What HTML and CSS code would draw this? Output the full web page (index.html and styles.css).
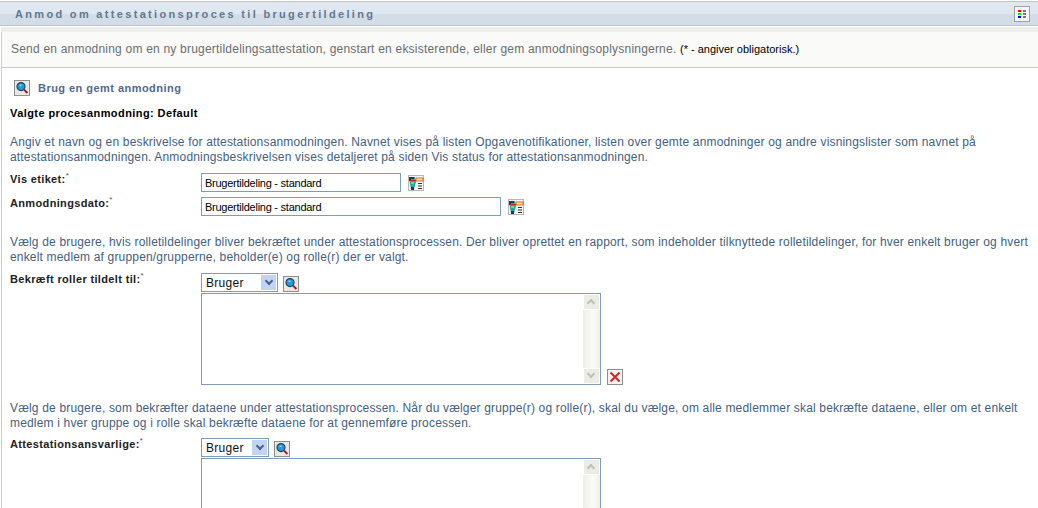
FILE: index.html
```
<!DOCTYPE html>
<html lang="da">
<head>
<meta charset="utf-8">
<title>Anmod om attestationsproces til brugertildeling</title>
<link rel="stylesheet" href="styles.css">
</head>
<body>
<svg class="defs" width="0" height="0" aria-hidden="true">
  <symbol id="i-search" viewBox="0 0 16 16">
    <rect x=".5" y=".5" width="15" height="15" fill="#e9e9e2" stroke="#8f8f8f"/>
    <circle cx="7" cy="6.600" r="4" fill="#2a9ad6" stroke="#17456e" stroke-width="1.200"/>
    <path d="M5.500 5.200h2" stroke="#bfe8fa" stroke-width="1.200"/>
    <path d="M10 9.600l3.400 3.400" stroke="#b01028" stroke-width="2"/>
  </symbol>
  <symbol id="i-picker" viewBox="0 0 16 16">
    <rect x="0" y="0" width="16" height="16" fill="#b8b8b0"/>
    <rect x="1" y="1" width="14" height="14" fill="#f4f4ee"/>
    <path d="M1 2h6l1 5-2 7H3L2 9z" fill="#27a89a"/>
    <path d="M1 2h5v2H3v2H1zM3 12h3v3H3z" fill="#173a72"/>
    <path d="M3 7h3v2H3z" fill="#8fd04c"/>
    <rect x="8" y="3" width="7" height="3" fill="#f8e678" stroke="#d0372a" stroke-width=".7"/>
    <path d="M2 5.500h6" stroke="#c8281e"/>
    <path d="M10 8.500h4M10 11h4M10 13.500h4" stroke="#333"/>
  </symbol>
  <symbol id="i-delete" viewBox="0 0 16 16">
    <rect x=".5" y=".5" width="15" height="15" fill="#f4f4ee" stroke="#8e8e8e"/>
    <path d="M3.500 3.500l9 9M12.500 3.500l-9 9" stroke="#d8232f" stroke-width="2"/>
  </symbol>
  <symbol id="i-grid" viewBox="0 0 16 16">
    <rect x="0" y="0" width="16" height="16" fill="#a0a0a0"/>
    <rect x="1" y="1" width="14" height="14" fill="#f3f4f4"/>
    <rect x="3" y="3" width="10" height="10" fill="#fff"/>
    <rect x="4" y="4" width="3" height="2" fill="#f00"/>
    <rect x="4" y="7" width="3" height="2" fill="#0e0"/>
    <rect x="4" y="10" width="3" height="2" fill="#00e"/>
    <rect x="9" y="4" width="3" height="2" fill="#777"/>
    <rect x="9" y="7" width="3" height="2" fill="#777"/>
    <rect x="9" y="10" width="3" height="2" fill="#777"/>
  </symbol>
</svg>

<header class="titlebar">
  <h1 class="title">Anmod om attestationsproces til brugertildeling</h1>
  <svg class="icon"><use href="#i-grid"/></svg>
</header>

<div class="panel">
  <p class="intro">Send en anmodning om en ny brugertildelingsattestation, genstart en eksisterende, eller gem anmodningsoplysningerne. <span class="legend">(* - angiver obligatorisk.)</span></p>

  <div class="content">
    <a class="saved" href="#"><svg class="icon"><use href="#i-search"/></svg><span>Brug en gemt anmodning</span></a>
    <div class="selected">Valgte procesanmodning: Default</div>

    <p class="help help-first">Angiv et navn og en beskrivelse for attestationsanmodningen. Navnet vises på listen Opgavenotifikationer, listen over gemte anmodninger og andre visningslister som navnet på attestationsanmodningen. Anmodningsbeskrivelsen vises detaljeret på siden Vis status for attestationsanmodningen.</p>

    <div class="row row-a">
      <label class="label">Vis etiket:<sup>*</sup></label>
      <div class="field"><input class="text text-short" value="Brugertildeling - standard"><svg class="icon"><use href="#i-picker"/></svg></div>
    </div>
    <div class="row row-b">
      <label class="label">Anmodningsdato:<sup>*</sup></label>
      <div class="field"><input class="text text-long" value="Brugertildeling - standard"><svg class="icon"><use href="#i-picker"/></svg></div>
    </div>

    <p class="help help-second">Vælg de brugere, hvis rolletildelinger bliver bekræftet under attestationsprocessen. Der bliver oprettet en rapport, som indeholder tilknyttede rolletildelinger, for hver enkelt bruger og hvert enkelt medlem af gruppen/grupperne, beholder(e) og rolle(r) der er valgt.</p>

    <div class="row">
      <label class="label">Bekræft roller tildelt til:<sup>*</sup></label>
      <div class="stack">
        <div class="field"><span class="select select-wide">Bruger<span class="arrow"></span></span><svg class="icon"><use href="#i-search"/></svg></div>
        <div class="field field-end">
          <div class="listbox"><div class="scrollbar"><span class="sb-btn sb-up"></span><span class="sb-btn sb-down"></span></div></div>
          <svg class="icon"><use href="#i-delete"/></svg>
        </div>
      </div>
    </div>

    <p class="help help-third">Vælg de brugere, som bekræfter dataene under attestationsprocessen. Når du vælger gruppe(r) og rolle(r), skal du vælge, om alle medlemmer skal bekræfte dataene, eller om et enkelt medlem i hver gruppe og i rolle skal bekræfte dataene for at gennemføre processen.</p>

    <div class="row row-last">
      <label class="label">Attestationsansvarlige:<sup>*</sup></label>
      <div class="stack">
        <div class="field"><span class="select select-narrow">Bruger<span class="arrow"></span></span><svg class="icon"><use href="#i-search"/></svg></div>
        <div class="field field-end">
          <div class="listbox"><div class="scrollbar"><span class="sb-btn sb-up"></span><span class="sb-btn sb-down"></span></div></div>
        </div>
      </div>
    </div>
  </div>
</div>
</body>
</html>
```
FILE: styles.css
```
html, body {
  margin: 0;
  padding: 0;
  height: 508px;
  overflow: hidden;
  background: #fff;
  font-family: "Liberation Sans", Arial, sans-serif;
  font-size: 12px;
  color: #000;
}
.defs { position: absolute; }
.icon { width: 16px; height: 16px; flex: none; display: block; }

.titlebar {
  box-sizing: border-box;
  height: 25px;
  margin-top: 1px;
  padding: 0 8px 0 15px;
  display: flex;
  align-items: center;
  justify-content: space-between;
  border-top: 1px solid #c4c4c4;
  border-bottom: 1px solid #bcc4cf;
  background: linear-gradient(#dfe7f0 0, #dfe7f0 50%, #d3dde8 55%, #d3dde8 100%);
}
.title {
  margin: 0;
  font-size: 11px;
  font-weight: bold;
  letter-spacing: 2.32px;
  color: #63778f;
}

.panel {
  margin-top: 6px;
  margin-left: 1px;
  border-left: 1px solid #cfcfcf;
  position: relative;
}
.panel::before {
  content: "";
  position: absolute;
  left: -1px;
  right: 0;
  top: -5px;
  height: 5px;
  background: #eeeeec;
}
.intro {
  margin: 0;
  box-sizing: border-box;
  height: 36px;
  padding: 10px 0 0 9px;
  font-size: 12px;
  line-height: 15px;
  letter-spacing: .21px;
  color: #6a6e72;
  background: #fafaf8;
  border-bottom: 1px solid #c8c8c8;
}
.legend { font-size: 11px; letter-spacing: 0; color: #000; }

.content { padding: 12px 0 0 8px; }
.saved {
  display: flex;
  align-items: center;
  gap: 8px;
  margin-left: 4px;
  font-weight: bold;
  font-size: 11px;
  letter-spacing: .46px;
  color: #50698c;
  text-decoration: none;
  height: 16px;
}
.selected {
  margin-top: 10px;
  font-weight: bold;
  font-size: 11px;
  letter-spacing: .42px;
  line-height: 14px;
}
.help {
  margin: 0;
  font-size: 12px;
  line-height: 15px;
  letter-spacing: .17px;
  color: #44617f;
}
.help-first { margin-top: 15px; }
.help-second { margin-top: 19px; }
.help-third { margin-top: 16px; }

.row { display: grid; grid-template-columns: 191px 1fr; }
.row-a { margin-top: 8px; }
.row-b { margin-top: 5px; }
.help + .row { margin-top: 8px; }
.help + .row-last { margin-top: 7px; }
.label {
  font-weight: bold;
  font-size: 11px;
  letter-spacing: .35px;
  line-height: 12px;
  color: #222;
}
.label sup {
  font-weight: normal;
  font-size: 8px;
  line-height: 0;
  color: #555;
}
.field { display: flex; align-items: center; gap: 7px; }
.field-end { align-items: flex-end; gap: 6px; }
.stack { display: flex; flex-direction: column; gap: 1px; }

.text {
  box-sizing: border-box;
  height: 19px;
  padding: 0 3px;
  border: 1px solid #7f9db9;
  font-family: "Liberation Sans", Arial, sans-serif;
  font-size: 11px;
  letter-spacing: -.25px;
  color: #000;
  background: #fff;
  outline: none;
}
.text-short { width: 200px; }
.text-long { width: 300px; }

.select {
  box-sizing: border-box;
  height: 19px;
  padding: 0 0 0 4px;
  border: 1px solid #7f9db9;
  display: flex;
  align-items: center;
  justify-content: space-between;
  font-size: 12px;
  color: #111;
  letter-spacing: .3px;
  position: relative;
}
.select-wide { width: 77px; }
.select-narrow { width: 68px; }
.select + .icon { margin-left: -2px; margin-top: 3px; align-self: flex-start; }
.arrow {
  width: 15px;
  height: 15px;
  margin-right: 1px;
  background: #c3d3f5;
  position: relative;
}
.arrow::after {
  content: "";
  position: absolute;
  left: 5px;
  top: 3px;
  width: 6px;
  height: 6px;
  border-right: 2px solid #4d6185;
  border-bottom: 2px solid #4d6185;
  box-sizing: border-box;
  transform: rotate(45deg);
}

.listbox {
  box-sizing: border-box;
  width: 400px;
  height: 92px;
  border: 1px solid #7f9db9;
  display: flex;
  justify-content: flex-end;
  background: #fff;
}
.scrollbar {
  width: 17px;
  display: flex;
  flex-direction: column;
  justify-content: space-between;
  background: linear-gradient(90deg, #efefe8, #fbfbf8 60%, #f0f0ea);
}
.sb-btn {
  height: 16px;
  background: #ecece6;
  border: 1px solid #fff;
  box-sizing: border-box;
  position: relative;
}
.sb-btn::after {
  content: "";
  position: absolute;
  left: 4px;
  width: 6px;
  height: 6px;
  border-left: 2px solid #c0c0b8;
  border-top: 2px solid #c0c0b8;
  box-sizing: border-box;
  transform: rotate(45deg);
  top: 5px;
}
.sb-down::after { transform: rotate(225deg); top: 2px; }
```
